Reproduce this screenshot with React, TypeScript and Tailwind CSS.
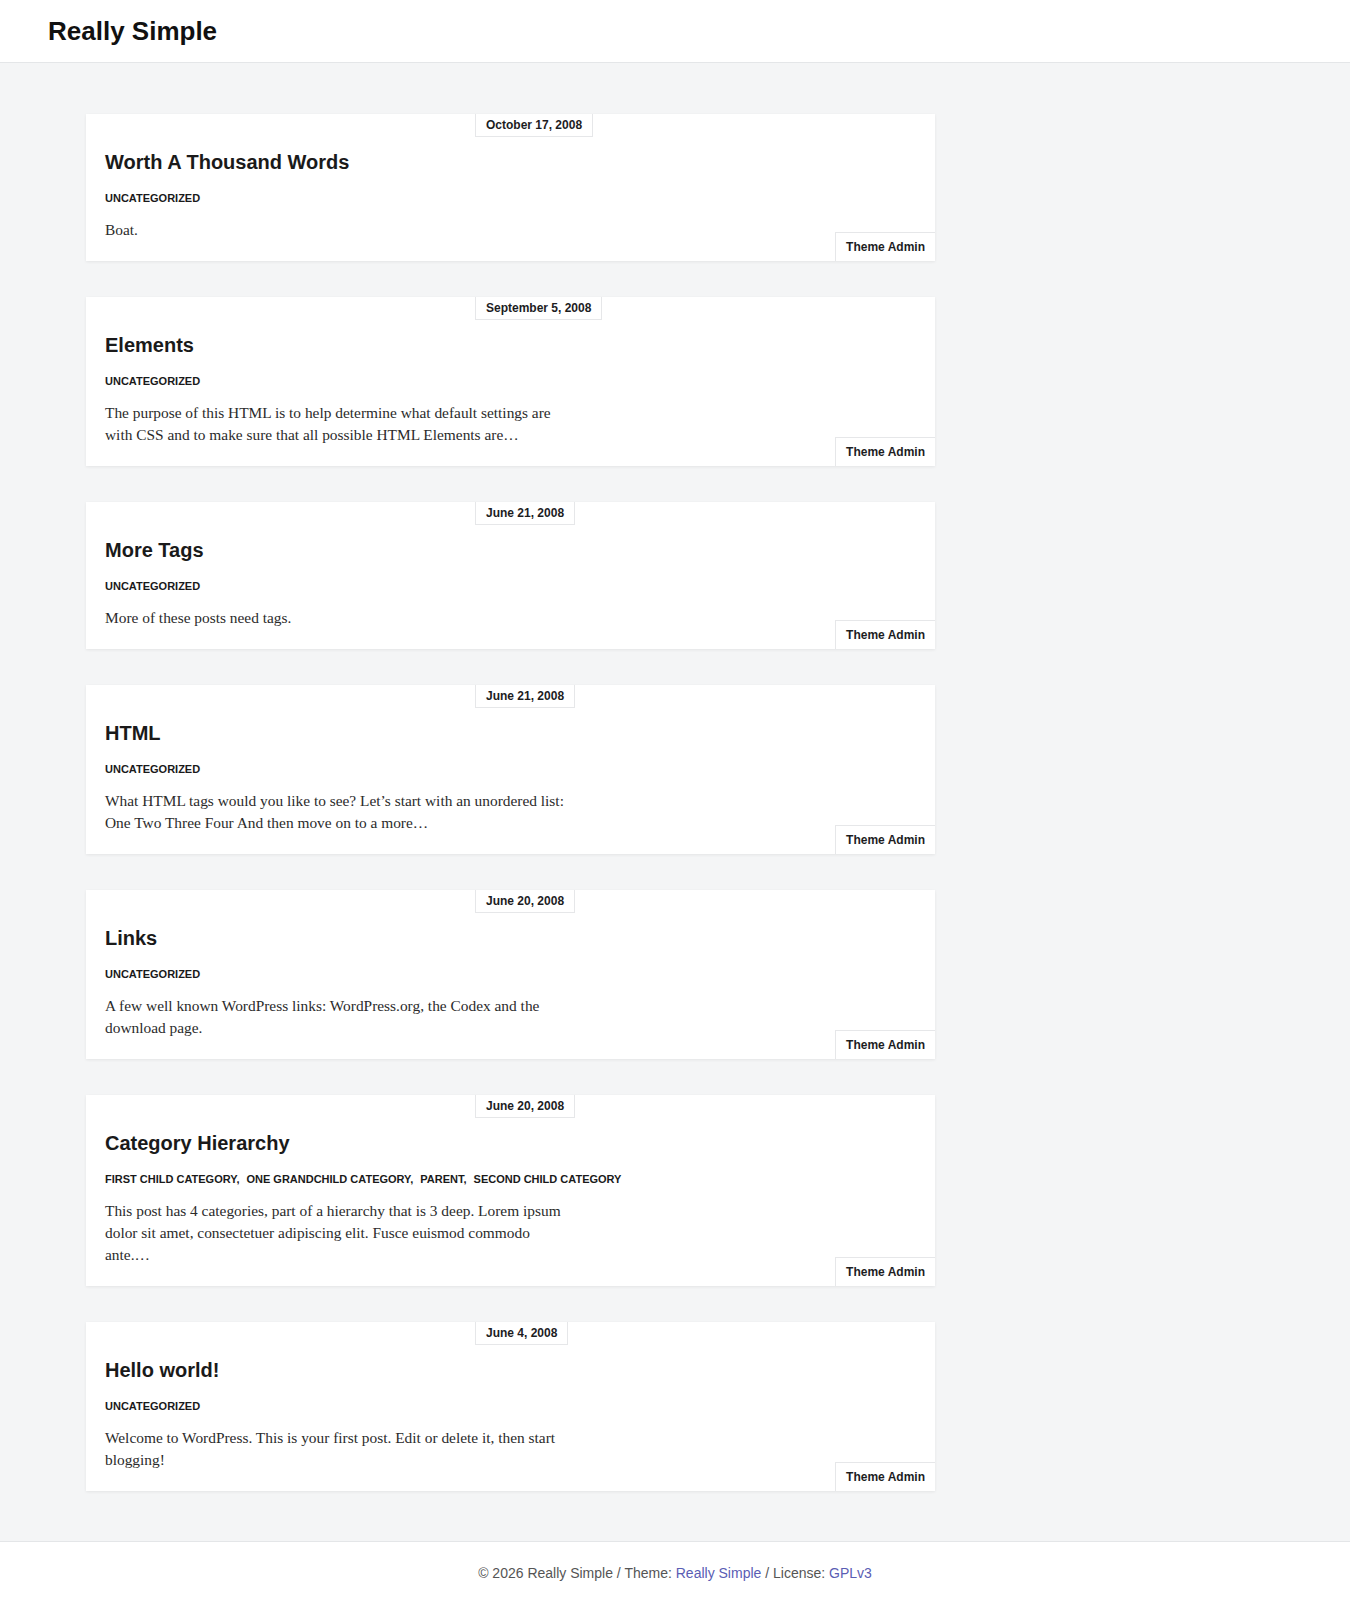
const posts = [
  {
    date: 'October 17, 2008',
    title: 'Worth A Thousand Words',
    cats: ['UNCATEGORIZED'],
    excerpt: 'Boat.',
  },
  {
    date: 'September 5, 2008',
    title: 'Elements',
    cats: ['UNCATEGORIZED'],
    excerpt:
      'The purpose of this HTML is to help determine what default settings are with CSS and to make sure that all possible HTML Elements are…',
  },
  {
    date: 'June 21, 2008',
    title: 'More Tags',
    cats: ['UNCATEGORIZED'],
    excerpt: 'More of these posts need tags.',
  },
  {
    date: 'June 21, 2008',
    title: 'HTML',
    cats: ['UNCATEGORIZED'],
    excerpt:
      'What HTML tags would you like to see? Let’s start with an unordered list: One Two Three Four And then move on to a more…',
  },
  {
    date: 'June 20, 2008',
    title: 'Links',
    cats: ['UNCATEGORIZED'],
    excerpt:
      'A few well known WordPress links: WordPress.org, the Codex and the download page.',
  },
  {
    date: 'June 20, 2008',
    title: 'Category Hierarchy',
    cats: [
      'FIRST CHILD CATEGORY',
      'ONE GRANDCHILD CATEGORY',
      'PARENT',
      'SECOND CHILD CATEGORY',
    ],
    excerpt:
      'This post has 4 categories, part of a hierarchy that is 3 deep. Lorem ipsum dolor sit amet, consectetuer adipiscing elit. Fusce euismod commodo ante.…',
  },
  {
    date: 'June 4, 2008',
    title: 'Hello world!',
    cats: ['UNCATEGORIZED'],
    excerpt:
      'Welcome to WordPress. This is your first post. Edit or delete it, then start blogging!',
  },
];

const sans = "font-['Liberation_Sans',Arial,sans-serif]";

function PostCard({ post }: { post: (typeof posts)[number] }) {
  return (
    <article className="relative bg-white px-[19px] pb-[20px] pt-[34px] shadow-[0_1px_3px_rgba(0,0,0,0.07)]">
      <span className="absolute left-[389px] top-0 border-x border-b border-[#e6e7e9] bg-white px-[10px] py-[3px] text-[12px] font-bold leading-[16px] text-[#1d1d1f]">
        {post.date}
      </span>
      <h2 className="text-[20px] font-bold leading-[28px] text-[#1a1a1a]">
        {post.title}
      </h2>
      <div className="mt-[14px] flex flex-wrap text-[11px] font-bold leading-[16px] text-[#1a1a1a]">
        {post.cats.map((cat, i) => (
          <span key={cat} className="mr-[7px]">
            {cat}
            {i < post.cats.length - 1 ? ',' : ''}
          </span>
        ))}
      </div>
      <p className="mt-[13px] max-w-[466px] font-['Liberation_Serif','Times_New_Roman',serif] text-[15.4px] leading-[22px] text-[#2b2b2b]">
        {post.excerpt}
      </p>
      <span className="absolute bottom-0 right-0 border-l border-t border-[#e6e7e9] bg-white px-[10px] py-[6px] text-[12px] font-bold leading-[16px] text-[#1d1d1f]">
        Theme Admin
      </span>
    </article>
  );
}

export default function App() {
  return (
    <div className={`min-h-screen bg-[#f4f5f6] ${sans}`}>
      <header className="flex h-[63px] items-center border-b border-[#e4e6e8] bg-white pl-[48px]">
        <h1 className="text-[26px] font-bold leading-none text-[#111]">
          Really Simple
        </h1>
      </header>
      <main className="pb-[50px] pl-[86px] pt-[51px]">
        <div className="flex w-[849px] flex-col gap-[36px]">
          {posts.map((post) => (
            <PostCard key={post.title} post={post} />
          ))}
        </div>
      </main>
      <footer className="flex h-[63px] items-center justify-center border-t border-[#e4e6e8] bg-white text-[14px] text-[#555]">
        <p>
          © 2026 Really Simple / Theme:{' '}
          <a href="#" className="text-[#5a5db4]">
            Really Simple
          </a>{' '}
          / License:{' '}
          <a href="#" className="text-[#5a5db4]">
            GPLv3
          </a>
        </p>
      </footer>
    </div>
  );
}
